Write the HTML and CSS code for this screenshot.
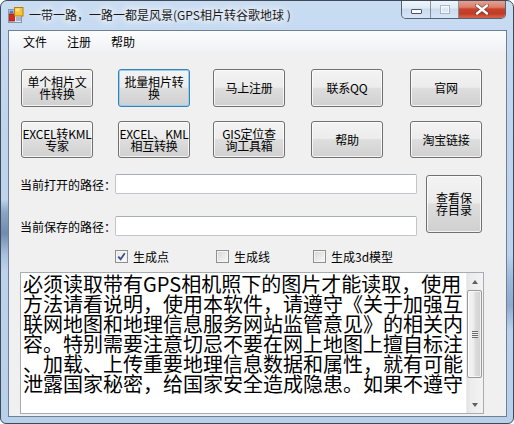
FILE: index.html
```html
<!DOCTYPE html>
<html lang="zh">
<head>
<meta charset="utf-8">
<title>一带一路，一路一都是风景</title>
<link rel="stylesheet" href="styles.css">
</head>
<body>
<div class="window">
  <div class="titlebar">
    <svg class="app-icon" viewBox="0 0 16 16" width="16" height="16">
      <rect x="0.5" y="2.5" width="13" height="13" fill="#e6e9ee" stroke="#8a94a3"/>
      <rect x="1.5" y="3.5" width="4" height="3" fill="#4f79c9"/>
      <rect x="1.5" y="7" width="5" height="7" fill="#d92a1c" stroke="#9b1a10" stroke-width="0.8"/>
      <rect x="6.5" y="0.5" width="8.5" height="8.5" fill="#f6c531" stroke="#c07a12"/>
      <rect x="7.5" y="1.5" width="4" height="3" fill="#fde68a"/>
      <rect x="8" y="10" width="5" height="4" fill="#9fb6d8"/>
    </svg>
    <span class="title">一带一路，一路一都是风景(GPS相片转谷歌地球 )</span>
    <div class="caption-btns">
      <div class="cb cb-min"><span class="min-glyph"></span></div>
      <div class="cb cb-max"><span class="max-glyph"></span></div>
      <div class="cb cb-close">
        <svg viewBox="0 0 14 11" width="14" height="11">
          <path d="M2 1.5 L12 9.5 M12 1.5 L2 9.5" stroke="#3a2a2a" stroke-width="4" stroke-linecap="round" opacity="0.55"/>
          <path d="M2 1.5 L12 9.5 M12 1.5 L2 9.5" stroke="#ffffff" stroke-width="2.4" stroke-linecap="round"/>
        </svg>
      </div>
    </div>
  </div>
  <div class="client">
    <div class="menubar">
      <span class="menu-item">文件</span>
      <span class="menu-item">注册</span>
      <span class="menu-item">帮助</span>
    </div>
    <div class="btn-grid">
      <div class="btn">单个相片文<br>件转换</div>
      <div class="btn btn-default">批量相片转<br>换</div>
      <div class="btn">马上注册</div>
      <div class="btn">联系QQ</div>
      <div class="btn">官网</div>
      <div class="btn">EXCEL转KML<br>专家</div>
      <div class="btn">EXCEL、KML<br>相互转换</div>
      <div class="btn">GIS定位查<br>询工具箱</div>
      <div class="btn">帮助</div>
      <div class="btn">淘宝链接</div>
    </div>
    <div class="paths">
      <div class="path-fields">
        <div class="path-row"><span class="path-label">当前打开的路径：</span><div class="textbox"></div></div>
        <div class="path-row"><span class="path-label">当前保存的路径：</span><div class="textbox"></div></div>
      </div>
      <div class="btn big-btn">查看保<br>存目录</div>
    </div>
    <div class="checks">
      <label class="check"><span class="box checked">
        <svg viewBox="0 0 9 9" width="9" height="9"><path d="M1.2 4.6 L3.6 7.2 L7.8 1.2" fill="none" stroke="#3d4f8a" stroke-width="1.8"/></svg>
      </span>生成点</label>
      <label class="check"><span class="box"></span>生成线</label>
      <label class="check"><span class="box"></span>生成3d模型</label>
    </div>
    <div class="memo">
      <div class="memo-text">
        <div>必须读取带有GPS相机照下的图片才能读取，使用</div>
        <div>方法请看说明，使用本软件，请遵守《关于加强互</div>
        <div>联网地图和地理信息服务网站监管意见》的相关内</div>
        <div>容。特别需要注意切忌不要在网上地图上擅自标注</div>
        <div>、加载、上传重要地理信息数据和属性，就有可能</div>
        <div>泄露国家秘密，给国家安全造成隐患。如果不遵守</div>
      </div>
      <div class="vscroll">
        <div class="sb-arrow"><span class="tri-up"></span></div>
        <div class="sb-thumb"><span class="grip"></span></div>
        <div class="sb-track"></div>
        <div class="sb-arrow"><span class="tri-down"></span></div>
      </div>
    </div>
  </div>
</div>
</body>
</html>
```
FILE: styles.css
```css
body {
  margin: 0;
  background: #ffffff;
  font-family: "Noto Sans CJK SC", "Noto Sans", sans-serif;
}

.window {
  width: 514px;
  height: 424px;
  box-sizing: border-box;
  border: 1px solid #3e4a58;
  border-radius: 7px 7px 6px 6px;
  overflow: hidden;
  display: flex;
  flex-direction: column;
  background:
    linear-gradient(to bottom, transparent 0%, transparent 47%, #8ba6c6 50%, #6f8bb0 55%, #a7c0de 60%, transparent 64%, transparent 100%) left top / 8px 100% no-repeat,
    linear-gradient(to bottom, transparent 0%, transparent 60%, #9cb8da 66%, #8eaad0 72%, transparent 78%, transparent 100%) right top / 7px 100% no-repeat,
    linear-gradient(to bottom, #c8dcf2 0%, #bfd5ee 30%, #b9d0ea 100%);
}

.titlebar {
  height: 29px;
  flex: none;
  display: flex;
  align-items: flex-start;
}

.app-icon {
  margin: 6px 0 0 7px;
  flex: none;
}

.title {
  margin: 5px 0 0 5px;
  font-size: 12px;
  line-height: 18px;
  color: #1a1a1a;
  white-space: nowrap;
  text-shadow: 0 0 6px rgba(255,255,255,0.95), 0 0 10px rgba(255,255,255,0.85), 0 0 14px rgba(255,255,255,0.7);
}

.caption-btns {
  margin: -1px 7px 0 auto;
  display: flex;
  height: 19px;
  border: 1px solid rgba(45, 58, 78, 0.75);
  border-top: none;
  border-radius: 0 0 5px 5px;
  overflow: hidden;
  box-sizing: border-box;
}

.cb {
  height: 100%;
  display: flex;
  align-items: center;
  justify-content: center;
  position: relative;
}

.cb-min, .cb-max {
  background: linear-gradient(to bottom, rgba(255,255,255,0.75) 0%, rgba(240,246,252,0.55) 45%, rgba(205,218,234,0.55) 50%, rgba(222,234,247,0.7) 100%);
  border-right: 1px solid rgba(60, 75, 95, 0.55);
}

.cb-min { width: 28px; }
.cb-max { width: 27px; }

.cb-close {
  width: 46px;
  background: linear-gradient(to bottom, #e8a596 0%, #dc7f6b 40%, #c8432c 50%, #c23c25 75%, #d7654a 100%);
}

.min-glyph {
  width: 9px;
  height: 3px;
  margin-top: 5px;
  background: #ffffff;
  border: 1px solid #4a5567;
  border-radius: 1px;
}

.max-glyph {
  width: 8px;
  height: 7px;
  border: 1px solid rgba(120, 135, 155, 0.55);
  box-shadow: inset 0 0 0 1px rgba(255,255,255,0.7);
  background: rgba(255,255,255,0.3);
}

.client {
  flex: 1;
  margin: 0 6px 6px 7px;
  border: 1px solid #6f8095;
  background: #f0f0f0;
  display: flex;
  flex-direction: column;
  font-size: 12px;
  color: #000;
}

.menubar {
  height: 22px;
  flex: none;
  display: flex;
  align-items: center;
  padding-left: 4px;
  background: linear-gradient(to bottom, #fcfcfd 0%, #f4f6f9 60%, #eef0f4 100%);
}

.menu-item {
  padding: 0 10px;
  line-height: 16px;
}

.btn-grid {
  margin: 16px 0 0 12px;
  display: grid;
  grid-template-columns: 97px 95px 98px 99px 72px;
  grid-template-rows: 38px 37px;
  row-gap: 14px;
}

.btn {
  width: 72px;
  box-sizing: border-box;
  border: 1px solid #707070;
  border-radius: 3px;
  background: linear-gradient(to bottom, #f3f3f3 0%, #ececec 48%, #dedede 50%, #d0d0d0 100%);
  box-shadow: inset 0 0 0 1px rgba(255,255,255,0.75);
  display: flex;
  align-items: center;
  justify-content: center;
  text-align: center;
  font-size: 12px;
  line-height: 12px;
  white-space: nowrap;
  letter-spacing: -0.2px;
}

.btn-default {
  border-color: #3c7fb1;
  box-shadow: inset 0 0 0 1px #8fd0f5;
}

.paths {
  margin: 16px 0 0 11px;
  display: flex;
  align-items: flex-start;
}

.path-fields {
  display: flex;
  flex-direction: column;
  gap: 22px;
}

.path-row {
  display: flex;
  align-items: center;
  height: 20px;
}

.path-label {
  width: 95px;
  white-space: nowrap;
}

.textbox {
  width: 302px;
  height: 20px;
  box-sizing: border-box;
  background: #ffffff;
  border: 1px solid #c2c6cc;
  border-top-color: #a9adb4;
  border-radius: 2px;
}

.big-btn {
  width: 56px;
  height: 58px;
  margin: 1px 0 0 9px;
  line-height: 12px;
  letter-spacing: 0;
}

.checks {
  margin-top: 14px;
  padding-left: 106px;
  height: 13px;
  display: grid;
  grid-template-columns: 101px 97px auto;
}

.check {
  display: flex;
  align-items: center;
  gap: 5px;
  line-height: 13px;
  white-space: nowrap;
}

.box {
  width: 13px;
  height: 13px;
  box-sizing: border-box;
  border: 1px solid #8e8f8f;
  background: linear-gradient(135deg, #d4d4d4 0%, #e6e6e6 45%, #fafafa 100%);
  box-shadow: inset 0 0 0 1px #f4f4f4;
  display: flex;
  align-items: center;
  justify-content: center;
  flex: none;
}

.box.checked {
  background: linear-gradient(135deg, #e4e4e4 0%, #f2f2f2 50%, #ffffff 100%);
}

.memo {
  margin: 9px 0 0 11px;
  width: 464px;
  height: 142px;
  box-sizing: border-box;
  border: 1px solid #a7acb3;
  background: #ffffff;
  display: flex;
}

.memo-text {
  flex: 1;
  padding: 1px 0 0 2px;
  font-size: 20px;
  line-height: 20px;
  white-space: nowrap;
  color: #000;
}

.vscroll {
  width: 17px;
  flex: none;
  display: flex;
  flex-direction: column;
  background: linear-gradient(to right, #e3e3e3 0%, #ececec 20%, #f3f3f3 100%);
  border-left: 1px solid #ececec;
  box-sizing: border-box;
}

.sb-arrow {
  height: 17px;
  flex: none;
  display: flex;
  align-items: center;
  justify-content: center;
}

.tri-up {
  width: 0;
  height: 0;
  border-left: 3.5px solid transparent;
  border-right: 3.5px solid transparent;
  border-bottom: 4px solid #606060;
}

.tri-down {
  width: 0;
  height: 0;
  border-left: 3.5px solid transparent;
  border-right: 3.5px solid transparent;
  border-top: 4px solid #606060;
}

.sb-thumb {
  height: 88px;
  flex: none;
  margin: 0 1px 0 0;
  box-sizing: border-box;
  border: 1px solid #999999;
  border-radius: 2px;
  background: linear-gradient(to right, #f5f5f5 0%, #ececec 45%, #dcdcdc 55%, #d2d2d2 100%);
  box-shadow: inset 0 0 0 1px rgba(255,255,255,0.7);
  display: flex;
  align-items: center;
  justify-content: center;
}

.grip {
  width: 6px;
  height: 7px;
  background: repeating-linear-gradient(to bottom, #6b6b6b 0px, #6b6b6b 1px, #eeeeee 1px, #eeeeee 2px);
}

.sb-track {
  flex: 1;
}
```
